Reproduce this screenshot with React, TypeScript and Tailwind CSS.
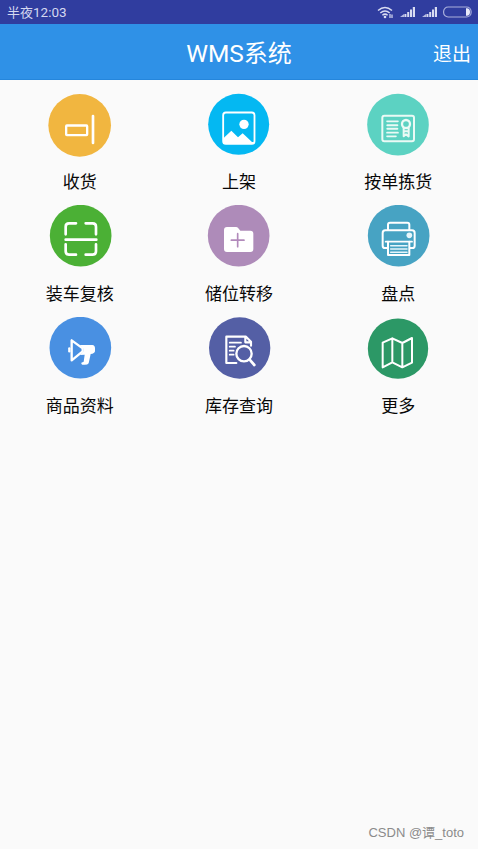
import type { ReactNode } from "react";

type Item = { label: string; viewBox: string; cx: number; cy: number; r: number; color: string; glyph: ReactNode };

const items: Item[] = [
  {
    label: "收货", viewBox: "53 24 192 192", cx: 148, cy: 121, r: 94, color: "#f1b640",
    glyph: (
      <>
        <rect x="107.500" y="121.500" width="63" height="29" rx="2" strokeWidth="7" />
        <path d="M188 93V174" strokeWidth="8" />
      </>
    ),
  },
  {
    label: "上架", viewBox: "51 24 192 192", cx: 146, cy: 118, r: 91.5, color: "#04b8f2",
    glyph: (
      <>
        <rect x="99.500" y="82.500" width="94" height="94" rx="8" strokeWidth="5.500" />
        <circle cx="162" cy="118" r="14" fill="#fff" stroke="none" />
        <path d="M101 159L124 137L144 157L158 145L186 171L192 171V177H101Z" fill="#fff" stroke="none" />
      </>
    ),
  },
  {
    label: "按单拣货", viewBox: "49 24 192 192", cx: 145, cy: 119, r: 92.5, color: "#5cd2c2",
    glyph: (
      <g stroke="#eafaf5">
        <rect x="98" y="92" width="95" height="77" rx="6" strokeWidth="6" />
        <path d="M112 109H145M112 143H145M112 154H139" strokeWidth="5" />
        <path d="M113 121H143M113 131H143" strokeWidth="6" />
        <circle cx="169" cy="117" r="12" strokeWidth="7" />
        <path d="M162 129V154L169 148L177 154V129M162 139H177" strokeWidth="6" />
      </g>
    ),
  },
  {
    label: "装车复核", viewBox: "53 21 192 192", cx: 151, cy: 113, r: 92.5, color: "#4bb035",
    glyph: (
      <path d="M106 109V86Q106 76 116 76H137M166 76H187Q197 76 197 86V109M106 139V160Q106 170 116 170H137M166 170H187Q197 170 197 160V139M106 125H198" strokeWidth="8" />
    ),
  },
  {
    label: "储位转移", viewBox: "51 21 192 192", cx: 146, cy: 113, r: 92.5, color: "#ae8bb9",
    glyph: (
      <>
        <path d="M111 87H138Q142 87 145 91L151 98H181Q190 98 190 107V153Q190 162 181 162H111Q102 162 102 153V96Q102 87 111 87Z" fill="#fff" stroke="none" />
        <path d="M143 107V146M124 126.500H162" stroke="#b28abb" strokeWidth="5" />
      </>
    ),
  },
  {
    label: "盘点", viewBox: "49 21 192 192", cx: 147, cy: 113, r: 92.500, color: "#47a3c3",
    glyph: (
      <>
        <path d="M115 96V80Q115 74 121 74H173Q179 74 179 80V96" strokeWidth="6" />
        <path d="M114 150H106Q99 150 99 143V105Q99 97 107 97H187Q195 97 195 105V143Q195 150 188 150H181" strokeWidth="6" />
        <path d="M108 131H187" strokeWidth="5.500" />
        <path d="M115 131V171H179V131" strokeWidth="6" />
        <path d="M123 143H172M123 153H172M123 163H172" strokeWidth="4.500" stroke="#e6f6fb" />
        <circle cx="179" cy="112" r="8.500" fill="#e6f6fb" stroke="none" />
      </>
    ),
  },
  {
    label: "商品资料", viewBox: "53 21 192 192", cx: 150, cy: 113, r: 92.500, color: "#4990e2",
    glyph: (
      <>
        <path d="M124 91V151L157 124V115Z" strokeWidth="7" />
        <path d="M117 115V124" strokeWidth="7" />
        <path d="M148 105H186Q194 106 194 115V124Q193 131 181 132L175 160Q171 166 156 164Q152 163 153 158L160 155L163 134L149 135L160 124V116Z" fill="#fff" stroke="none" />
      </>
    ),
  },
  {
    label: "库存查询", viewBox: "51 21 192 192", cx: 149, cy: 114, r: 92, color: "#545fa5",
    glyph: (
      <>
        <path d="M139 159H109V80H168L183 95V107M166 81V97H182" strokeWidth="6.500" />
        <path d="M119 98H153M119 110H135M119 122H131M119 134H131" strokeWidth="5" />
        <circle cx="162" cy="131" r="23" strokeWidth="7" />
        <path d="M179 149L193 165" strokeWidth="8" />
      </>
    ),
  },
  {
    label: "更多", viewBox: "529 21 192 192", cx: 625, cy: 116, r: 90.5, color: "#2c9866",
    glyph: (
      <path d="M579 98L608 85L638 99L667 84V158L638 172L608 157L579 172ZM608 85V157M638 99V172" strokeWidth="6" />
    ),
  },
];

function Signal() {
  return (
    <svg width="16" height="12" viewBox="0 0 16 12" className="text-[#d9dcf2]" fill="currentColor">
      <path d="M0 11L4 8V11Z" opacity="0.800" />
      <path d="M4.400 8H6.400V11H4.400ZM7.200 6H9.200V11H7.200ZM10 3.500H12V11H10ZM12.800 1H15V11H12.800Z" />
    </svg>
  );
}

function StatusBar() {
  return (
    <div className="flex h-6 items-center bg-[#303d9f] pl-[7px] pr-[5px] text-[#d4d8f0]">
      <span className="text-[13px] leading-none">半夜<span className="font-[Roboto] text-[13.500px]">12:03</span></span>
      <div className="ml-auto flex items-center">
        <svg width="17" height="13" viewBox="0 0 17 13" fill="none" stroke="#d9dcf2" strokeWidth="1.500">
          <path d="M1 4.500Q8 -1.500 15 4.500M3.300 7Q8 3 12.700 7M5.400 9.200Q8 7 10.600 9.200" />
          <circle cx="8" cy="11" r="1.300" fill="#d9dcf2" stroke="none" />
          <path d="M13 8V12M15 8.500V12" strokeWidth="1.200" />
        </svg>
        <span className="ml-1.5 flex"><Signal /></span>
        <span className="ml-1.5 flex"><Signal /></span>
        <svg width="31" height="12" viewBox="0 0 31 12" className="ml-1">
          <rect x="1.600" y="1" width="27.500" height="10" rx="4.500" fill="none" stroke="#a9afdc" strokeWidth="1.200" />
          <path d="M24 2.200H25Q28 2.500 28 6Q28 9.500 25 9.800H24Z" fill="#e8eafa" />
        </svg>
      </div>
    </div>
  );
}

export default function App() {
  return (
    <div className="flex h-[849px] w-[478px] flex-col overflow-hidden bg-[#fafafa] font-['Noto_Sans_CJK_SC',sans-serif]">
      <StatusBar />
      <header className="grid h-14 grid-cols-[1fr_auto_1fr] items-center border-b border-[#2586dc] bg-[#2f91e7] px-[7px] text-white">
        <span />
        <h1 className="pt-[3px] text-[24px] font-normal leading-none"><span className="font-[Roboto] text-[24.500px]">WMS</span>系统</h1>
        <button className="justify-self-end pt-px text-[19px] leading-none">退出</button>
      </header>
      <main className="grid grid-cols-3 pt-[13px]">
        {items.map((item) => (
          <div key={item.label} className="flex h-28 flex-col items-center">
            <svg width="64" height="64" viewBox={item.viewBox} fill="none" stroke="#fff" strokeLinecap="round" strokeLinejoin="round">
              <circle cx={item.cx} cy={item.cy} r={item.r} fill={item.color} stroke="none" />
              {item.glyph}
            </svg>
            <span className="mt-[15px] text-[17px] leading-[17px] text-[#080808]">{item.label}</span>
          </div>
        ))}
      </main>
      <footer className="mt-auto pb-[8px] pr-[14px] text-right font-['Liberation_Sans','Noto_Sans_CJK_SC',sans-serif] text-[13px] leading-4 text-[#8b8b8b]">
        CSDN @谭_toto
      </footer>
    </div>
  );
}
